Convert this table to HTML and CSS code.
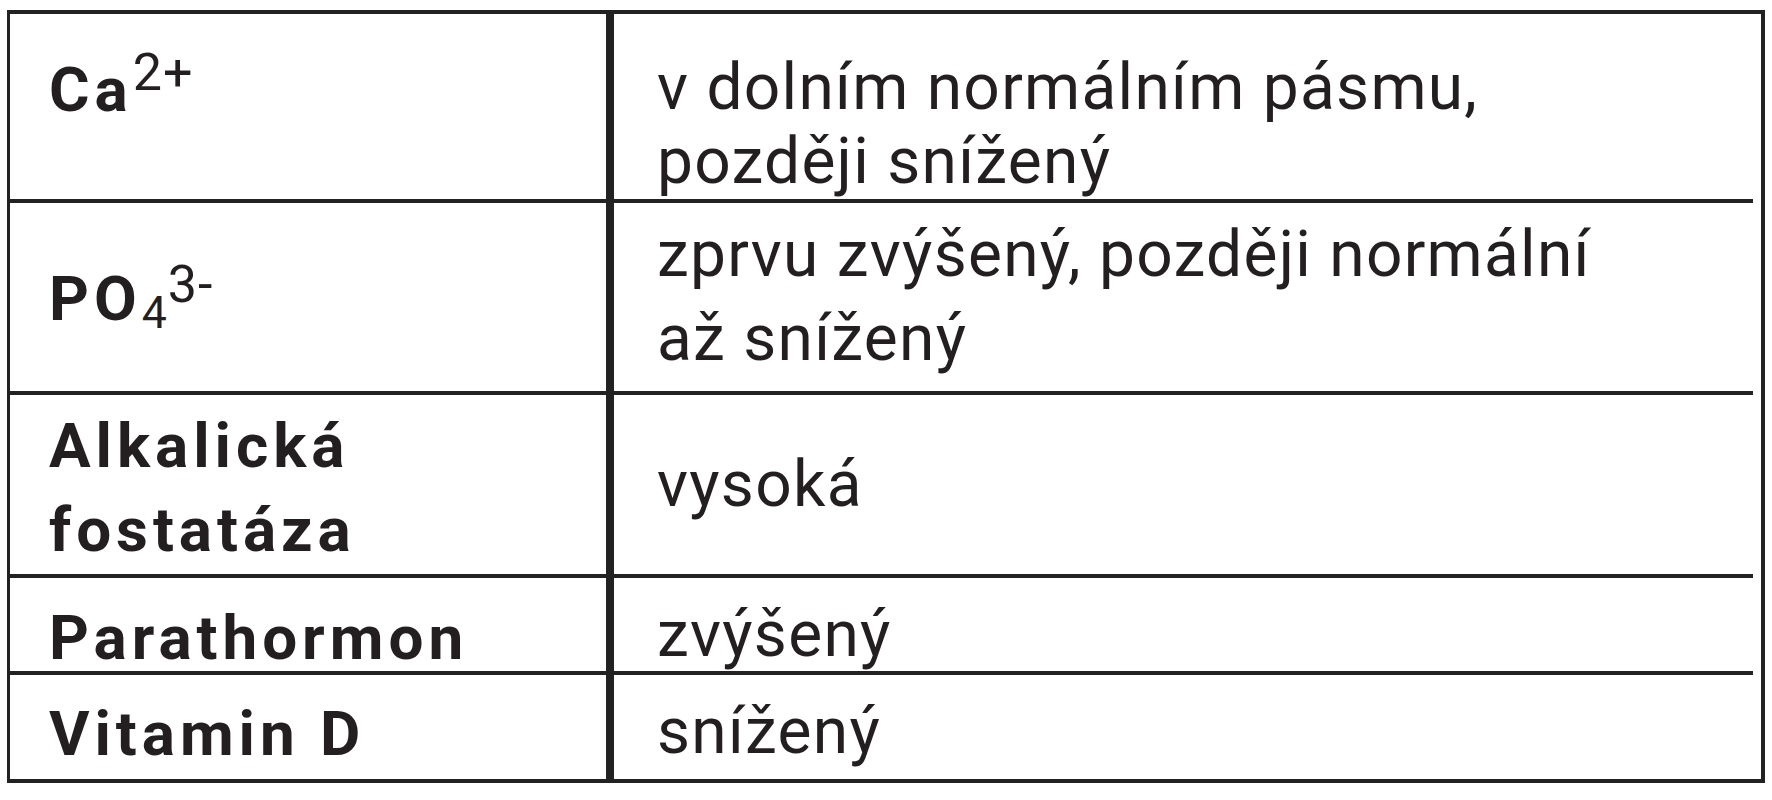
FILE: index.html
```html
<!DOCTYPE html>
<html lang="cs">
<head>
<meta charset="utf-8">
<title>Tabulka</title>
<link rel="stylesheet" href="styles.css">
</head>
<body>
<div class="table">
  <div class="cell key r1">Ca<span class="sup">2+</span></div>
  <div class="cell val r1"><div>v dolním normálním pásmu,</div><div>později snížený</div></div>

  <div class="cell key r2">PO<span class="sub">4</span><span class="sup low">3-</span></div>
  <div class="cell val r2"><div>zprvu zvýšený, později normální</div><div>až snížený</div></div>

  <div class="cell key r3"><div>Alkalická</div><div>fostatáza</div></div>
  <div class="cell val r3"><div>vysoká</div></div>

  <div class="cell key r4">Parathormon</div>
  <div class="cell val r4">zvýšený</div>

  <div class="cell key r5 last">Vitamin D</div>
  <div class="cell val r5 last">snížený</div>
</div>
</body>
</html>
```
FILE: styles.css
```css
html, body {
  margin: 0;
  padding: 0;
  background: #ffffff;
}
body {
  padding: 10px 0 0 7px;
}
.table {
  display: grid;
  grid-template-columns: 604px 1139px;
  grid-template-rows: 189px 192px 183px 97px 104px;
  width: 1751px;
  border: 4px solid #222222;
  border-left-width: 3px;
  color: #231f20;
  font-family: Roboto, "DejaVu Sans", sans-serif;
}
.cell {
  display: block;
  border-bottom: 4px solid #222222;
  white-space: nowrap;
  line-height: 80px;
}
.cell.last {
  border-bottom: none;
}
.key {
  padding-left: 39px;
  font-weight: bold;
  font-size: 62px;
  letter-spacing: 0.08em;
  border-right: 8px solid #222222;
}
.val {
  padding-left: 43px;
  font-size: 64px;
  font-weight: normal;
  letter-spacing: 0.02em;
}
.key.r1 { padding-top: 36px; }
.key.r2 { padding-top: 56px; }
.key.r3 { padding-top: 9px; line-height: 84px; }
.key.r4 { padding-top: 20px; }
.key.r5 { padding-top: 19px; }
.val.r1 { padding-top: 37px; line-height: 74px; }
.val.r2 { padding-top: 10px; line-height: 84px; }
.val.r3 { padding-top: 50px; }
.val.r4 { padding-top: 17px; }
.val.r5 { padding-top: 17px; }
.sup {
  font-weight: normal;
  font-size: 0.84em;
  letter-spacing: 0.02em;
  position: relative;
  top: -0.4em;
}
.sup.low {
  top: -0.34em;
}
.sub {
  font-weight: normal;
  font-size: 0.72em;
  letter-spacing: 0.02em;
  position: relative;
  top: 0.17em;
}
```
